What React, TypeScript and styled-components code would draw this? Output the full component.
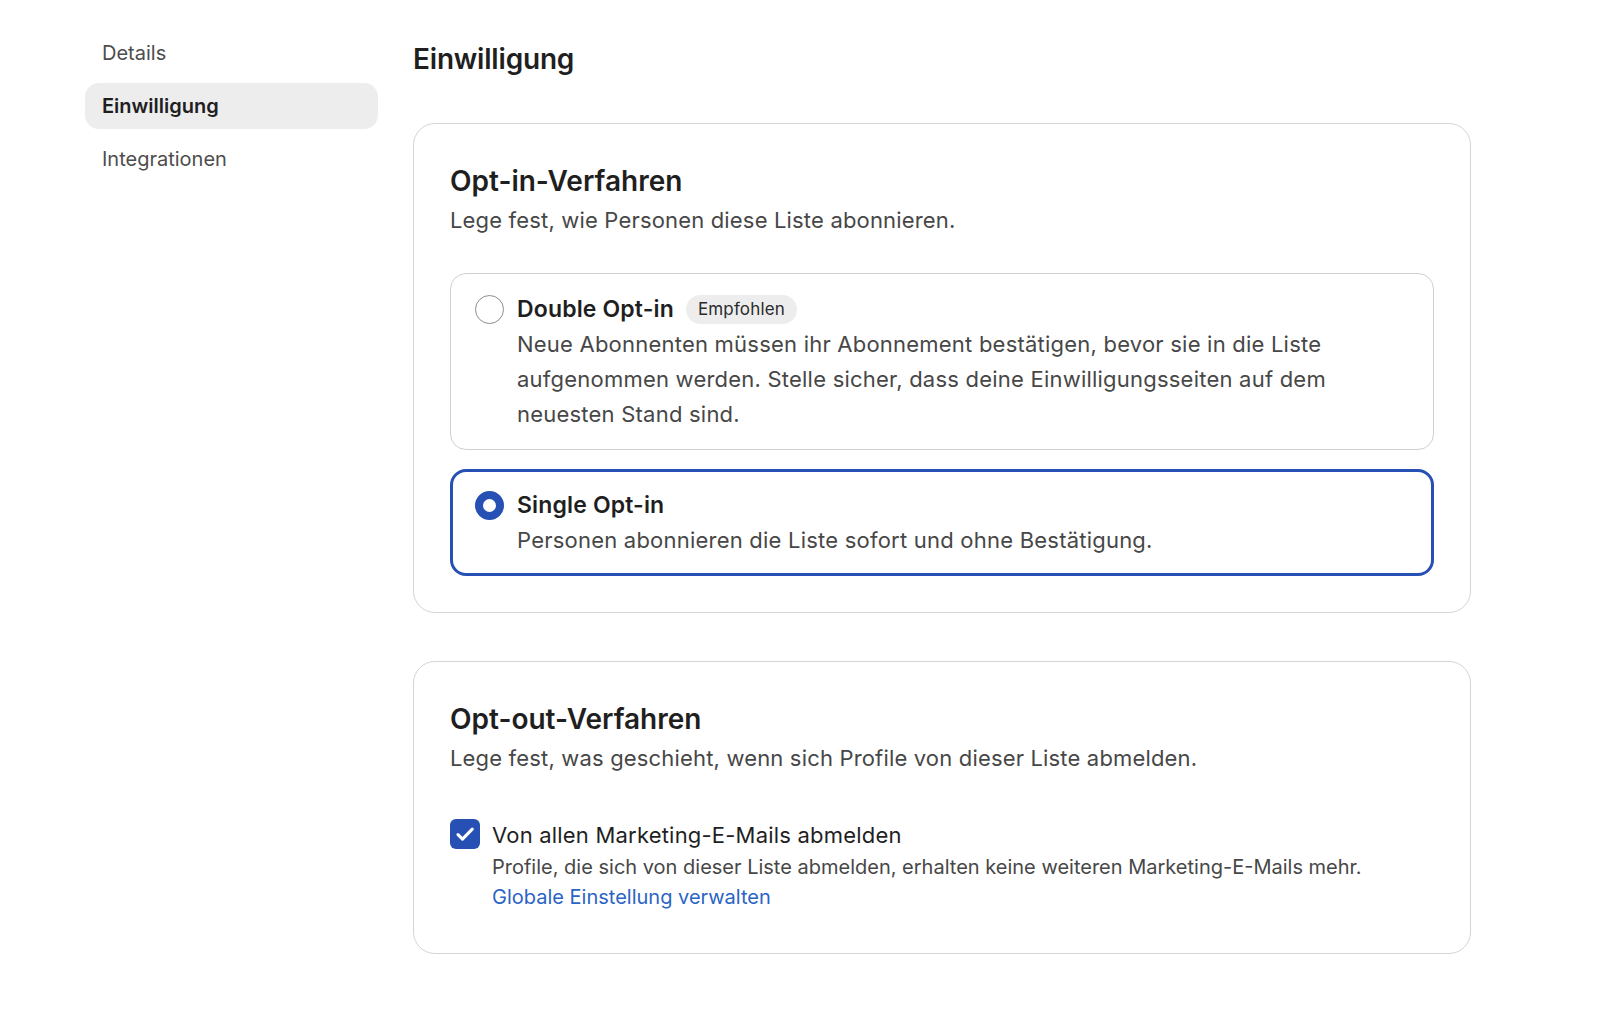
import React, { useState } from "react";
import styled, { createGlobalStyle } from "styled-components";

const GlobalStyle = createGlobalStyle`
  * { box-sizing: border-box; }
  html, body {
    margin: 0;
    padding: 0;
    background: #ffffff;
    font-family: Inter, "Noto Sans", "Liberation Sans", sans-serif;
    color: #1f1f1f;
    -webkit-font-smoothing: antialiased;
  }
`;

const Page = styled.div`
  display: flex;
  align-items: flex-start;
  gap: 35px;
  padding: 30px 0 60px 85px;
`;

const Sidebar = styled.nav`
  width: 293px;
  flex: none;
  display: flex;
  flex-direction: column;
  gap: 7px;
`;

const NavItem = styled.a<{ $active?: boolean }>`
  display: flex;
  align-items: center;
  height: 46px;
  padding: 0 17px;
  border-radius: 14px;
  font-size: 20px;
  font-weight: ${(p) => (p.$active ? 600 : 400)};
  color: ${(p) => (p.$active ? "#1f1f1f" : "#4d4d4d")};
  background: ${(p) => (p.$active ? "#ededee" : "transparent")};
  cursor: pointer;
  text-decoration: none;
`;

const Main = styled.main`
  width: 1058px;
  flex: none;
  display: flex;
  flex-direction: column;
`;

const PageTitle = styled.h1`
  margin: 11px 0 46px;
  font-size: 28px;
  line-height: 36px;
  font-weight: 600;
  letter-spacing: -0.2px;
`;

const Card = styled.section<{ $bottom?: number }>`
  border: 1px solid #d5d5d7;
  border-radius: 22px;
  padding: 39px 36px ${(p) => p.$bottom ?? 36}px;
  display: flex;
  flex-direction: column;
  & + & {
    margin-top: 48px;
  }
`;

const CardTitle = styled.h2`
  margin: 0;
  font-size: 28px;
  line-height: 36px;
  font-weight: 600;
  letter-spacing: 0;
`;

const CardText = styled.p`
  margin: 5px 0 0;
  font-size: 22px;
  line-height: 32px;
  letter-spacing: 0.17px;
  color: #474747;
`;

const Options = styled.div`
  margin-top: 37px;
  display: flex;
  flex-direction: column;
  gap: 19px;
`;

const Option = styled.label<{ $selected?: boolean }>`
  display: flex;
  gap: 13px;
  align-items: flex-start;
  border-radius: 16px;
  cursor: pointer;
  border: ${(p) => (p.$selected ? "3px solid #2650b4" : "1px solid #d0d0d2")};
  padding: ${(p) => (p.$selected ? "17px 22px 15px" : "19px 24px 17px")};
`;

const Radio = styled.span<{ $checked?: boolean }>`
  flex: none;
  width: 29px;
  height: 29px;
  margin-top: 2px;
  border-radius: 50%;
  border: ${(p) => (p.$checked ? "8px solid #2650b4" : "1.5px solid #8d8d90")};
  background: #ffffff;
`;

const OptionBody = styled.div`
  display: flex;
  flex-direction: column;
  gap: 2px;
`;

const OptionHead = styled.div`
  display: flex;
  align-items: center;
  gap: 12px;
`;

const OptionTitle = styled.span`
  font-size: 23px;
  line-height: 32px;
  font-weight: 600;
  letter-spacing: 0.15px;
  color: #1f1f1f;
`;

const Badge = styled.span`
  display: inline-flex;
  align-items: center;
  height: 29px;
  padding: 0 12px;
  border-radius: 15px;
  background: #ededee;
  font-size: 17px;
  letter-spacing: 0.15px;
  color: #2a2a2a;
`;

const OptionText = styled.span`
  font-size: 22px;
  line-height: 35px;
  letter-spacing: 0.22px;
  color: #474747;
  max-width: 870px;
`;

const CheckRow = styled.label`
  margin-top: 45px;
  display: flex;
  gap: 12px;
  align-items: flex-start;
  cursor: pointer;
`;

const CheckBox = styled.span`
  flex: none;
  width: 30px;
  height: 30px;
  border-radius: 6px;
  background: #2650b4;
  display: flex;
  align-items: center;
  justify-content: center;
`;

const CheckBody = styled.div`
  display: flex;
  flex-direction: column;
`;

const CheckLabel = styled.span`
  font-size: 22px;
  line-height: 32px;
  letter-spacing: 0.2px;
  color: #1f1f1f;
`;

const CheckText = styled.span`
  margin-top: 2px;
  font-size: 20px;
  line-height: 29px;
  color: #474747;
`;

const Link = styled.a`
  font-size: 20px;
  line-height: 30px;
  color: #2b64c4;
  text-decoration: none;
  cursor: pointer;
`;

export default function App() {
  const [mode, setMode] = useState<"double" | "single">("single");

  return (
    <>
      <GlobalStyle />
      <Page>
        <Sidebar>
          <NavItem>Details</NavItem>
          <NavItem $active>Einwilligung</NavItem>
          <NavItem>Integrationen</NavItem>
        </Sidebar>

        <Main>
          <PageTitle>Einwilligung</PageTitle>

          <Card>
            <CardTitle>Opt-in-Verfahren</CardTitle>
            <CardText>Lege fest, wie Personen diese Liste abonnieren.</CardText>
            <Options>
              <Option $selected={mode === "double"} onClick={() => setMode("double")}>
                <Radio $checked={mode === "double"} />
                <OptionBody>
                  <OptionHead>
                    <OptionTitle>Double Opt-in</OptionTitle>
                    <Badge>Empfohlen</Badge>
                  </OptionHead>
                  <OptionText>
                    Neue Abonnenten müssen ihr Abonnement bestätigen, bevor sie in die Liste
                    aufgenommen werden. Stelle sicher, dass deine Einwilligungsseiten auf dem
                    neuesten Stand sind.
                  </OptionText>
                </OptionBody>
              </Option>
              <Option $selected={mode === "single"} onClick={() => setMode("single")}>
                <Radio $checked={mode === "single"} />
                <OptionBody>
                  <OptionHead>
                    <OptionTitle>Single Opt-in</OptionTitle>
                  </OptionHead>
                  <OptionText>Personen abonnieren die Liste sofort und ohne Bestätigung.</OptionText>
                </OptionBody>
              </Option>
            </Options>
          </Card>

          <Card $bottom={41}>
            <CardTitle>Opt-out-Verfahren</CardTitle>
            <CardText>Lege fest, was geschieht, wenn sich Profile von dieser Liste abmelden.</CardText>
            <CheckRow>
              <CheckBox>
                <svg width="22" height="22" viewBox="0 0 20 20" fill="none">
                  <path
                    d="M3.6 10.6l4.1 4.1L16.6 5.6"
                    stroke="#ffffff"
                    strokeWidth="2.8"
                    strokeLinecap="round"
                    strokeLinejoin="round"
                  />
                </svg>
              </CheckBox>
              <CheckBody>
                <CheckLabel>Von allen Marketing-E-Mails abmelden</CheckLabel>
                <CheckText>
                  Profile, die sich von dieser Liste abmelden, erhalten keine weiteren Marketing-E-Mails mehr.
                </CheckText>
                <Link>Globale Einstellung verwalten</Link>
              </CheckBody>
            </CheckRow>
          </Card>
        </Main>
      </Page>
    </>
  );
}
